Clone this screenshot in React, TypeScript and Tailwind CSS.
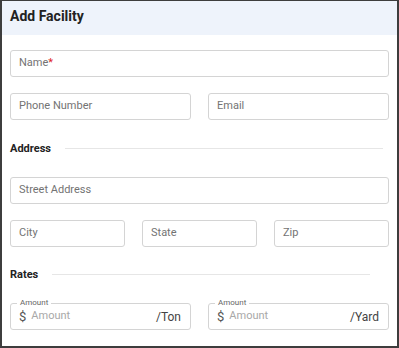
import React from "react";

const font = { fontFamily: "Roboto, 'Liberation Sans', sans-serif" };

const Field = ({ placeholder, required }: { placeholder: string; required?: boolean }) => (
  <div className="flex h-[27px] w-full items-center rounded-[3px] border border-[#d4d4d4] bg-white px-[8px]">
    <span className="text-[11px] text-[#737373]">
      {placeholder}
      {required && <span className="text-[#e02424]">*</span>}
    </span>
  </div>
);

const RateField = ({ unit }: { unit: string }) => (
  <div className="relative flex h-[27px] w-full items-center rounded-[3px] border border-[#d4d4d4] bg-white px-[8px]">
    <span className="absolute left-[6px] top-[-6px] bg-white px-[3px] text-[8px] leading-[10px] text-[#666]">
      Amount
    </span>
    <span className="text-[13px] text-[#555]">$</span>
    <span className="ml-[5px] text-[11px] text-[#a8a8a8]">Amount</span>
    <span className="ml-auto pr-[1px] text-[12px] text-[#444]">{unit}</span>
  </div>
);

const Heading = ({ title, lineRight }: { title: string; lineRight: string }) => (
  <div className="flex h-[13px] items-center">
    <span className="text-[11px] font-bold leading-[13px] text-[#222]">{title}</span>
    <div className={`ml-[14px] h-px flex-1 bg-[#e6e6e6] ${lineRight}`} />
  </div>
);

export default function App() {
  return (
    <div
      style={font}
      className="h-[348px] w-[399px] overflow-hidden border-x-2 border-b-2 border-t border-[#3d3d3d] bg-white"
    >
      <div className="flex h-[34px] items-center bg-[#eef3fb] px-[8px] pb-[4px]">
        <h1 className="text-[14px] font-bold text-[#222]">Add Facility</h1>
      </div>
      <div className="flex flex-col px-[8px] pt-[15px]">
        <Field placeholder="Name" required />
        <div className="mt-[16px] grid grid-cols-2 gap-[17px]">
          <Field placeholder="Phone Number" />
          <Field placeholder="Email" />
        </div>
        <div className="mb-[22px] mt-[22px]">
          <Heading title="Address" lineRight="mr-[6px]" />
        </div>
        <Field placeholder="Street Address" />
        <div className="mt-[16px] grid grid-cols-3 gap-[17px]">
          <Field placeholder="City" />
          <Field placeholder="State" />
          <Field placeholder="Zip" />
        </div>
        <div className="mb-[22px] mt-[21px]">
          <Heading title="Rates" lineRight="mr-[19px]" />
        </div>
        <div className="grid grid-cols-2 gap-[17px]">
          <RateField unit="/Ton" />
          <RateField unit="/Yard" />
        </div>
      </div>
    </div>
  );
}
